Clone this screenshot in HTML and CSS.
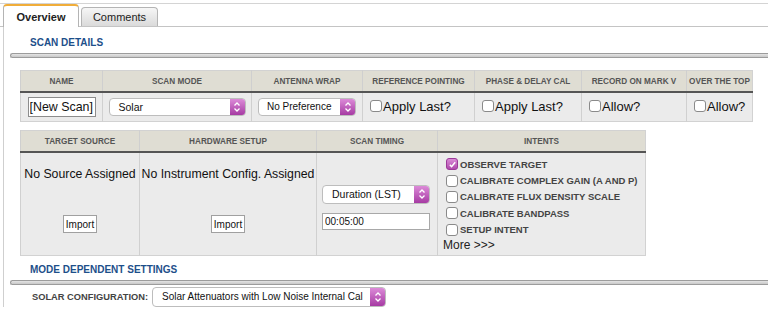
FILE: index.html
```html
<!DOCTYPE html>
<html lang="en">
<head>
  <meta charset="UTF-8" />
  <title>Scan Editor</title>
  <link rel="stylesheet" href="styles.css">
</head>
<body>
  <div class="tabs">
    <div class="tab active">Overview</div>
    <div class="tab">Comments</div>
  </div>

  <div class="panel">
    <h3 class="section-title">SCAN DETAILS</h3>
    <div class="rule"></div>

    <table class="grid grid-main">
      <colgroup>
        <col style="width:82px"><col style="width:149px"><col style="width:111px"><col style="width:112px">
        <col style="width:107px"><col style="width:105px"><col style="width:66px">
      </colgroup>
      <thead>
        <tr>
          <th>NAME</th><th>SCAN MODE</th><th>ANTENNA WRAP</th><th>REFERENCE POINTING</th>
          <th>PHASE &amp; DELAY CAL</th><th>RECORD ON MARK V</th><th>OVER THE TOP</th>
        </tr>
      </thead>
      <tbody>
        <tr>
          <td class="center"><input class="name-input" type="text" value="[New Scan]" /></td>
          <td class="center">
            <div class="select sel-mode"><span class="sel-value">Solar</span><span class="sel-arrow"><svg width="8" height="12" viewBox="0 0 8 12"><path d="M1.5 4.5 L4 2 L6.5 4.5 M1.5 7.5 L4 10 L6.5 7.5" fill="none" stroke="#fff" stroke-width="1.3"/></svg></span></div>
          </td>
          <td class="center">
            <div class="select sel-wrap"><span class="sel-value">No Preference</span><span class="sel-arrow"><svg width="8" height="12" viewBox="0 0 8 12"><path d="M1.5 4.5 L4 2 L6.5 4.5 M1.5 7.5 L4 10 L6.5 7.5" fill="none" stroke="#fff" stroke-width="1.3"/></svg></span></div>
          </td>
          <td><label class="check"><span class="cb"></span>Apply Last?</label></td>
          <td><label class="check"><span class="cb"></span>Apply Last?</label></td>
          <td><label class="check"><span class="cb"></span>Allow?</label></td>
          <td><label class="check"><span class="cb"></span>Allow?</label></td>
        </tr>
      </tbody>
    </table>

    <table class="grid grid-second">
      <colgroup>
        <col style="width:119px"><col style="width:177px"><col style="width:121px"><col style="width:208px">
      </colgroup>
      <thead>
        <tr><th>TARGET SOURCE</th><th>HARDWARE SETUP</th><th>SCAN TIMING</th><th>INTENTS</th></tr>
      </thead>
      <tbody>
        <tr>
          <td class="stack">
            <div class="assigned">No Source Assigned</div>
            <button class="import">Import</button>
          </td>
          <td class="stack">
            <div class="assigned">No Instrument Config. Assigned</div>
            <button class="import">Import</button>
          </td>
          <td class="timing">
            <div class="select sel-timing"><span class="sel-value">Duration (LST)</span><span class="sel-arrow"><svg width="8" height="12" viewBox="0 0 8 12"><path d="M1.5 4.5 L4 2 L6.5 4.5 M1.5 7.5 L4 10 L6.5 7.5" fill="none" stroke="#fff" stroke-width="1.3"/></svg></span></div>
            <input class="time-input" type="text" value="00:05:00" />
          </td>
          <td class="intents">
            <label class="intent"><span class="cb checked"><svg width="9" height="9" viewBox="0 0 9 9"><path d="M1.8 4.8 L3.6 6.6 L7.2 2.2" fill="none" stroke="#fff" stroke-width="1.5"/></svg></span>OBSERVE TARGET</label>
            <label class="intent"><span class="cb"></span>CALIBRATE COMPLEX GAIN (A AND P)</label>
            <label class="intent"><span class="cb"></span>CALIBRATE FLUX DENSITY SCALE</label>
            <label class="intent"><span class="cb"></span>CALIBRATE BANDPASS</label>
            <label class="intent"><span class="cb"></span>SETUP INTENT</label>
            <div class="more">More &gt;&gt;&gt;</div>
          </td>
        </tr>
      </tbody>
    </table>

    <h3 class="section-title second">MODE DEPENDENT SETTINGS</h3>
    <div class="rule"></div>

    <div class="config-row">
      <span class="config-label">SOLAR CONFIGURATION:</span>
      <div class="select sel-config"><span class="sel-value">Solar Attenuators with Low Noise Internal Cal</span><span class="sel-arrow"><svg width="8" height="12" viewBox="0 0 8 12"><path d="M1.5 4.5 L4 2 L6.5 4.5 M1.5 7.5 L4 10 L6.5 7.5" fill="none" stroke="#fff" stroke-width="1.3"/></svg></span></div>
    </div>
  </div>
</body>
</html>
```

FILE: styles.css
```css
body {
  margin: 0;
  font-family: "Liberation Sans", Arial, sans-serif;
  background: #fff;
  color: #222;
}
.tabs {
  display: flex;
  align-items: flex-end;
  gap: 2px;
  margin-top: 3px;
  padding-left: 3px;
  border-top: 1px solid #d4d4d4;
  border-bottom: 1px solid #c4c4c4;
  height: 22px;
}
.tab {
  box-sizing: border-box;
  width: 77px;
  height: 19px;
  border: 1px solid #b4b4b4;
  border-bottom: none;
  border-radius: 4px 4px 0 0;
  background: linear-gradient(#f6f6f6, #dadada);
  font-size: 11px;
  text-align: center;
  line-height: 19px;
  color: #222;
}
.tab.active {
  width: 76px;
  height: 23px;
  margin-bottom: -1px;
  background: #fff;
  border-top: 2px solid #f0ad3a;
  font-weight: bold;
  line-height: 23px;
}
.panel {
  margin-left: 3px;
  border-left: 1px solid #cfcfcf;
  padding: 10px 0 0 0;
}
.section-title {
  margin: 0 0 0 26px;
  font-size: 10px;
  line-height: 12px;
  font-weight: bold;
  color: #1d4f8a;
}
.section-title.second {
  margin-top: 8px;
}
.rule {
  margin: 4px 0 0 6px;
  height: 3px;
  border: 1px solid #9c9c9c;
  border-right: none;
  border-radius: 3px 0 0 3px;
  background: linear-gradient(#e4e4e4, #c8c8c8);
}
.grid {
  border-collapse: collapse;
  table-layout: fixed;
  margin-left: 16px;
  border: 1px solid #d2d2d2;
}
.grid-main {
  width: 732px;
  margin-top: 12px;
}
.grid-second {
  width: 625px;
  margin-top: 8px;
}
.grid th {
  height: 20px;
  padding: 0;
  background: #dfddd3;
  border-left: 1px solid #cfcfcf;
  border-bottom: 2px solid #555;
  font-size: 8.2px;
  font-weight: bold;
  color: #555;
  white-space: nowrap;
  overflow: hidden;
}
.grid td {
  padding: 0 0 0 7px;
  background: #ebebeb;
  border-left: 1px solid #d0d0d0;
  vertical-align: middle;
}
.grid-main td {
  height: 28px;
}
.grid td.center {
  padding: 0;
  text-align: center;
}
.name-input {
  box-sizing: border-box;
  width: 68px;
  height: 20px;
  padding: 0 1px;
  border: 1px solid #8c8c8c;
  font-family: inherit;
  font-size: 12.4px;
  color: #111;
}
.select {
  box-sizing: border-box;
  display: inline-flex;
  align-items: stretch;
  vertical-align: middle;
  height: 18px;
  border: 1px solid #bdbdbd;
  border-radius: 4px;
  background: #fff;
  text-align: left;
  overflow: hidden;
  flex-shrink: 0;
}
.sel-value {
  flex: 1;
  min-width: 0;
  padding-left: 9px;
  font-size: 10.5px;
  line-height: 16px;
  color: #111;
  white-space: nowrap;
  overflow: hidden;
}
.sel-arrow {
  flex: 0 0 15px;
  display: flex;
  align-items: center;
  justify-content: center;
  background: linear-gradient(#dc8ad8, #a63ba3);
}
.sel-mode { width: 137px; }
.sel-wrap { width: 98px; }
.sel-wrap .sel-value { padding-left: 8px; font-size: 10px; }
.sel-timing { width: 108px; height: 19px; }
.sel-timing .sel-value { line-height: 17px; }
.sel-config { width: 234px; height: 20px; }
.sel-config .sel-value { line-height: 18px; font-size: 10px; padding-left: 9px; }
.check {
  display: inline-flex;
  align-items: center;
  font-size: 13px;
  color: #111;
}
.cb {
  box-sizing: border-box;
  display: inline-flex;
  align-items: center;
  justify-content: center;
  width: 12px;
  height: 12px;
  margin-right: 1px;
  border: 1px solid #8a8a8a;
  border-radius: 3px;
  background: #fff;
}
.cb.checked {
  border-color: #9b3a98;
  background: linear-gradient(#d98ad6, #b04aad);
}
.grid-second td {
  height: 99px;
}
.grid td.stack {
  padding: 0;
  vertical-align: top;
  text-align: center;
}
.assigned {
  margin-top: 14px;
  font-size: 12.3px;
  line-height: 15px;
  color: #111;
  white-space: nowrap;
}
.import {
  margin-top: 33px;
  height: 18px;
  padding: 0 2px;
  border: 1px solid #a0a0a0;
  background: #fff;
  font-family: inherit;
  font-size: 10px;
  color: #111;
}
.grid td.timing {
  padding: 0 0 0 5px;
}
.sel-timing {
  display: flex;
  margin-top: 6px;
}
.time-input {
  box-sizing: border-box;
  display: block;
  width: 108px;
  height: 17px;
  margin-top: 9px;
  padding: 0 2px;
  border: 1px solid #a8a8a8;
  font-family: inherit;
  font-size: 10px;
  color: #111;
}
.grid td.intents {
  padding: 3px 0 0 8px;
  vertical-align: top;
}
.intent {
  display: flex;
  align-items: center;
  height: 16.4px;
  font-size: 9.5px;
  font-weight: bold;
  color: #444;
  white-space: nowrap;
}
.intent .cb {
  margin-right: 2px;
}
.more {
  font-size: 12px;
  line-height: 14px;
  color: #222;
  margin-left: -3px;
}
.config-row {
  display: flex;
  align-items: center;
  gap: 4px;
  margin: 2px 0 0 28px;
}
.config-label {
  font-size: 9.3px;
  font-weight: bold;
  color: #444;
}
```
